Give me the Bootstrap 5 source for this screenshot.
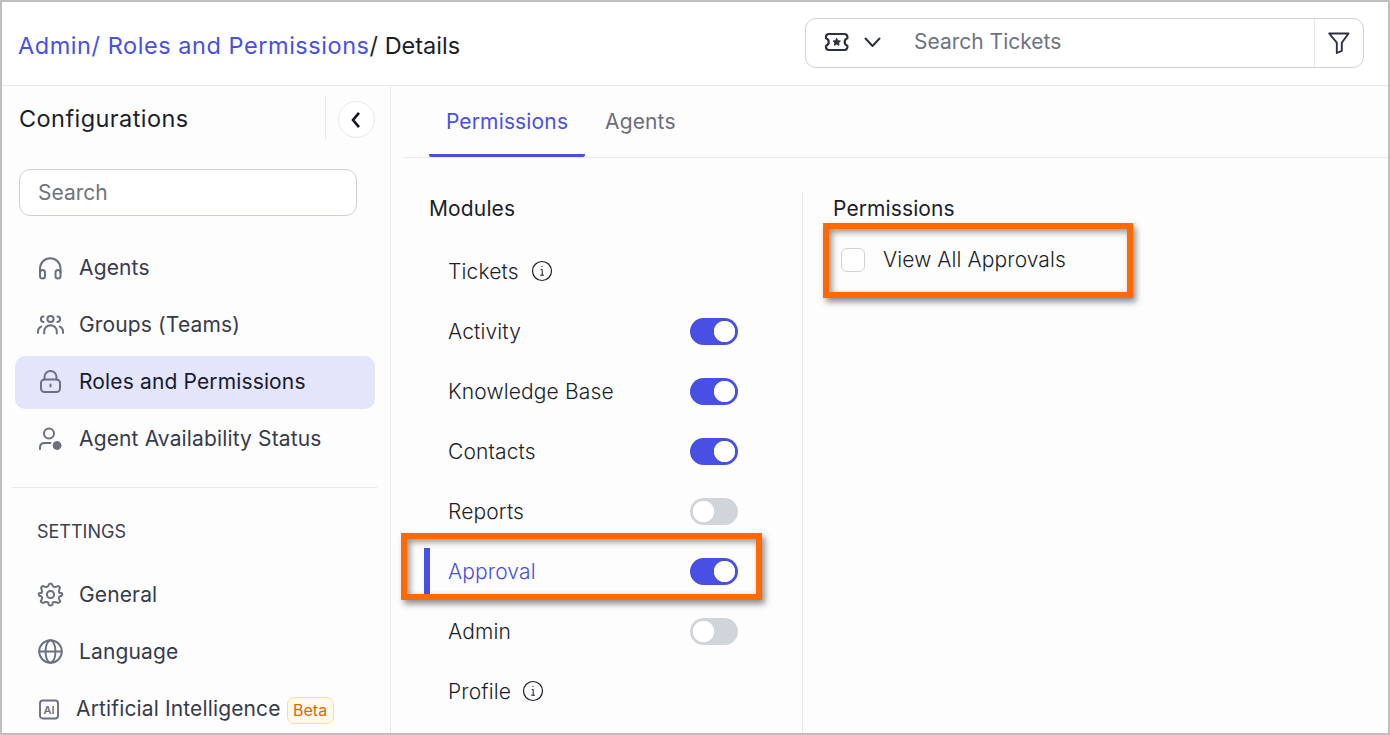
<!DOCTYPE html>
<html lang="en">
<head>
    <meta charset="UTF-8">
    <meta name="viewport" content="width=device-width, initial-scale=1">
    <title>Roles and Permissions</title>
    <link href="https://cdn.jsdelivr.net/npm/bootstrap@5.3.3/dist/css/bootstrap.min.css" rel="stylesheet">
    <script src="https://cdn.jsdelivr.net/npm/bootstrap@5.3.3/dist/js/bootstrap.bundle.min.js"></script>
    <style>
        :root {
            --brand: #4850e4;
            --line: #e9e8ee;
            --muted: #6b7080;
        }
        body {
            font-family: Inter, "Liberation Sans", sans-serif;
            font-size: 21px;
            line-height: 1.2;
            color: #1b1d28;
        }
        svg { display: block; fill: none; stroke: currentColor; stroke-linecap: round; stroke-linejoin: round; flex: none; }
        .page-frame { height: 100vh; border: 2px solid #bfbfbf; background: #fdfdfe; }

        /* top bar */
        .topbar { height: 84px; border-bottom: 1px solid var(--line); padding: 0 24px 0 16px; background: #fff; }
        .crumbs { font-size: 23.5px; letter-spacing: 0; padding-top: 6px; }
        .crumbs a { color: var(--brand); letter-spacing: .55px; }
        .ticket-search { width: 559px; height: 50px; margin-bottom: 1px; border: 1px solid #d0d1d8; border-radius: 11px; color: #2c2f40; }
        .ticket-search > svg { margin-bottom: 2px; }
        .ticket-search .caret { margin-left: 11px; }
        .ticket-search input { border: 0; padding: 0 0 3px; margin-left: 23px; background: none; flex: 1; min-width: 0; font-size: 21px; }
        .ticket-search input::placeholder, .side-search::placeholder { color: #6f7380; opacity: 1; }
        .filter-btn { width: 49px; border-left: 1px solid var(--line); }

        /* sidebar */
        .sidebar { width: 389px; border-right: 1px solid var(--line); }
        .side-head { height: 44px; margin: 10px 15px 0 17px; }
        .side-title { font-size: 23.5px; letter-spacing: .42px; padding-top: 2px; }
        .side-toggle { border-left: 1px solid var(--line); padding-left: 12px; height: 44px; }
        .round-btn { width: 37px; height: 37px; margin-top: 3px; border: 1px solid #e9e5ef; border-radius: 50%; background: #fff; color: #14151f; }
        .side-search { width: 338px; height: 47px; margin: 29px 0 0 17px; border: 1px solid #d0d1d8; border-radius: 11px; padding: 0 18px 1px; font-size: 21px; background: #fff; }
        .side-nav { margin: 26px 15px 0 13px; gap: 4px; }
        .side-nav .nav-link { height: 53px; padding: 0 0 2px 21px; border-radius: 10px; color: #373b49; gap: 15px; letter-spacing: .14px; }
        .side-nav .nav-link svg { color: var(--muted); }
        .side-nav .nav-link.active { background: #e4e4fb; color: #171a2c; }
        .side-rule { height: 1px; background: var(--line); margin: 21px 13px 0 10px; }
        .side-section { font-size: 18px; color: #3d404e; margin: 33px 0 0 35px; }
        .beta { font-size: 16px; letter-spacing: 0; color: #d9690d; background: #fff8eb; border: 1px solid #fbdf8f; border-radius: 7px; height: 27px; width: 47px; margin-left: -9px; margin-top: 5px; }

        /* content */
        .tabs { height: 72px; margin-left: 13px; padding-left: 25px; border-bottom: 1px solid var(--line); letter-spacing: .15px; }
        .tabs .nav-link { padding: 0; width: 156px; height: 71px; color: #6b6e7a; }
        .tabs .nav-link.active { padding-top: 3px; color: var(--brand); border-bottom: 3px solid var(--brand); border-radius: 2px; }
        .modules { width: 411px; padding: 38px 0 0 38px; letter-spacing: .14px; }
        .module-list { margin-top: 21px; font-weight: 300; }
        .module-row { height: 59px; margin-bottom: 1px; padding-left: 19px; padding-right: 64px; }
        .module-row > svg { margin-bottom: 1px; }
        .module-row.active { color: var(--brand); }
        .module-row.active .marker { position: absolute; left: -5px; top: 6px; width: 6px; height: 46px; background: var(--brand); }
        .form-switch .form-check-input { width: 48px; height: 27px; margin: 0; border: 0; background-color: #d1d5db; background-size: auto;
            background-image: radial-gradient(circle 11px at 13.5px 13.5px, #fff 10.3px, transparent 11px); background-position: 0 0; }
        .form-switch .form-check-input:checked { background-color: var(--brand); background-position: 0 0;
            background-image: radial-gradient(circle 11px at 34.5px 13.5px, #fff 10.3px, transparent 11px); }
        .grants { border-left: 1px solid var(--line); margin-top: 34px; padding: 4px 0 0 30px; flex: 1; letter-spacing: .1px; }
        .grant-row { margin: 26px 0 0 8px; height: 25px; gap: 18px; font-weight: 300; }
        .grant-row .form-check-input { width: 24px; height: 24px; margin: 0; border: 1px solid #cfd0da; border-radius: 6px; }

        /* callout boxes laid over the content */
        .callout { position: absolute; border: 6px solid #ff6900; pointer-events: none;
            box-shadow: 3px 4px 6px rgba(60, 50, 50, .55), inset 3px 3px 6px rgba(60, 60, 60, .55); }
        .callout-module { left: -28px; top: -9px; width: 361px; height: 67px; }
        .callout-grant { left: -18px; top: -24px; width: 310px; height: 75px; }
    </style>
</head>
<body>
<div class="page-frame d-flex flex-column overflow-hidden">

    <header class="topbar d-flex align-items-center justify-content-between flex-shrink-0">
        <div class="crumbs"><a href="#" class="text-decoration-none">Admin/ Roles and Permissions</a>/ Details</div>
        <div class="ticket-search d-flex align-items-center bg-white">
            <svg class="ms-3" width="28" height="24" viewBox="0 0 28 24" stroke-width="2.200">
                <path d="M7 4h15.400a3 3 0 0 1 3 3v1.300c-3.600 1.200-3.600 6.200 0 7.400V17a3 3 0 0 1-3 3H7a3 3 0 0 1-3-3v-1.300c3.600-1.200 3.600-6.200 0-7.400V7a3 3 0 0 1 3-3z"/>
                <path d="M14.700 8.500l1.200 2.200 2.500.4-1.800 1.700.4 2.500-2.300-1.200-2.300 1.200.4-2.500-1.800-1.700 2.500-.4z" fill="currentColor" stroke-width="1"/>
            </svg>
            <svg class="caret" width="22" height="18" viewBox="0 0 22 18" stroke-width="2"><path d="M4.500 5.500l7 7.500 7-7.500"/></svg>
            <input type="text" class="ps-2" placeholder="Search Tickets">
            <div class="filter-btn h-100 d-flex align-items-center justify-content-center">
                <svg width="24" height="24" viewBox="0 0 24 24" stroke-width="1.900"><path d="M2.200 2.500h19.300l-6.700 9.200v8.100l-5 2.200V11.700z"/></svg>
            </div>
        </div>
    </header>

    <div class="d-flex flex-grow-1">
        <aside class="sidebar flex-shrink-0">
            <div class="side-head d-flex align-items-center justify-content-between">
                <div class="side-title">Configurations</div>
                <div class="side-toggle d-flex align-items-center">
                    <button type="button" class="round-btn d-flex align-items-center justify-content-center p-0">
                        <svg width="14" height="18" viewBox="0 0 14 18" stroke-width="2.600"><path d="M9 1.800L3 9l6 7.200" stroke-linecap="butt" stroke-linejoin="miter"/></svg>
                    </button>
                </div>
            </div>
            <input type="text" class="side-search d-block" placeholder="Search">

            <nav class="side-nav nav flex-column">
                <a href="#" class="nav-link d-flex align-items-center">
                    <svg width="28" height="28" viewBox="0 0 28 28" stroke-width="2"><path d="M4 18.500v-4a10.200 10.200 0 0 1 20.500 0v4"/><rect x="4" y="16" width="5" height="8.500" rx="2.500"/><rect x="19.500" y="16" width="5" height="8.500" rx="2.500"/></svg>
                    Agents
                </a>
                <a href="#" class="nav-link d-flex align-items-center">
                    <svg width="28" height="28" viewBox="0 0 28 28" stroke-width="2"><circle cx="14.500" cy="8" r="3.100"/><path d="M8.200 22.500v-2a6.300 6.300 0 0 1 12.600 0v2M2 22v-1.500c0-2.400 1.200-4.200 3.300-4.900M27 22v-1.500c0-2.400-1.200-4.200-3.300-4.900M7.500 5.400c-3.500.3-3.500 5 0 5.600M21.500 5.400c3.500.3 3.500 5 0 5.600"/></svg>
                    Groups (Teams)
                </a>
                <a href="#" class="nav-link active d-flex align-items-center">
                    <svg width="28" height="28" viewBox="0 0 28 28" stroke-width="2"><rect x="5" y="11.500" width="19" height="12.500" rx="3.500"/><path d="M8.500 11.500V9a6 6 0 0 1 12 0v2.500M14.500 16.500v2"/></svg>
                    Roles and Permissions
                </a>
                <a href="#" class="nav-link d-flex align-items-center">
                    <svg width="28" height="28" viewBox="0 0 28 28" stroke-width="2"><circle cx="13" cy="8.500" r="5"/><path d="M4 24v-1.500c0-3 2-4.500 4.500-4.500h6"/><circle cx="21" cy="20.500" r="3.900" fill="currentColor" stroke-width="1"/></svg>
                    Agent Availability Status
                </a>
            </nav>

            <div class="side-rule"></div>
            <div class="side-section">SETTINGS</div>

            <nav class="side-nav nav flex-column">
                <a href="#" class="nav-link d-flex align-items-center">
                    <svg width="28" height="28" viewBox="0 0 28 28" stroke-width="2"><circle cx="14.500" cy="14.500" r="3.600"/><path d="M14.500 3.500q1.600 0 2 1.800t2 1.700 2.700-.7 2.100.4.400 2.100-.7 2.700 1.700 1.400 1.500 1.600-1.500 1.600-1.700 1.400.7 2.700-.4 2.100-2.100.4-2.700-.7-2 1.700-2 1.800-2-1.800-2-1.700-2.700.7-2.100-.4-.4-2.100.7-2.700-1.700-1.400-1.500-1.600 1.500-1.600 1.700-1.400-.7-2.700.4-2.100 2.100-.4 2.700.7 2-1.700 2-1.800z"/></svg>
                    General
                </a>
                <a href="#" class="nav-link d-flex align-items-center">
                    <svg width="28" height="28" viewBox="0 0 28 28" stroke-width="1.900"><circle cx="14.500" cy="14.500" r="11.300"/><ellipse cx="14.500" cy="14.500" rx="5" ry="11.300"/><path d="M3.200 14.500h22.600"/></svg>
                    Language
                </a>
                <a href="#" class="nav-link d-flex align-items-center">
                    <svg width="25" height="28" viewBox="0 0 25 28" stroke-width="1.900"><rect x="4" y="6.500" width="18" height="18" rx="2.800"/><text x="13" y="19.500" font-size="11" font-weight="600" text-anchor="middle" fill="currentColor" stroke="none" letter-spacing="0">AI</text></svg>
                    Artificial Intelligence
                    <span class="beta d-flex align-items-center justify-content-center">Beta</span>
                </a>
            </nav>
        </aside>

        <main class="flex-grow-1 d-flex flex-column">
            <ul class="tabs nav flex-shrink-0">
                <li class="nav-item"><a href="#" class="nav-link active d-flex align-items-center justify-content-center">Permissions</a></li>
                <li class="nav-item"><a href="#" class="nav-link d-flex align-items-center ps-3 ms-1">Agents</a></li>
            </ul>

            <div class="d-flex flex-grow-1">
                <section class="modules flex-shrink-0">
                    <div>Modules</div>
                    <div class="module-list">
                        <div class="module-row d-flex align-items-center">
                            Tickets
                            <svg class="ms-2" width="30" height="24" viewBox="0 0 30 24" stroke-width="1.200"><circle cx="15" cy="12" r="9.500"/><path d="M14.200 10.500h1v5.500M13.600 16.200h3M15 7.300v.3" stroke-width="1"/></svg>
                        </div>
                        <div class="module-row d-flex align-items-center justify-content-between">
                            Activity
                            <div class="form-check form-switch p-0 m-0 d-flex"><input class="form-check-input" type="checkbox" role="switch" checked></div>
                        </div>
                        <div class="module-row d-flex align-items-center justify-content-between">
                            Knowledge Base
                            <div class="form-check form-switch p-0 m-0 d-flex"><input class="form-check-input" type="checkbox" role="switch" checked></div>
                        </div>
                        <div class="module-row d-flex align-items-center justify-content-between">
                            Contacts
                            <div class="form-check form-switch p-0 m-0 d-flex"><input class="form-check-input" type="checkbox" role="switch" checked></div>
                        </div>
                        <div class="module-row d-flex align-items-center justify-content-between">
                            Reports
                            <div class="form-check form-switch p-0 m-0 d-flex"><input class="form-check-input" type="checkbox" role="switch"></div>
                        </div>
                        <div class="module-row active position-relative d-flex align-items-center justify-content-between">
                            <span class="callout callout-module"></span>
                            <span class="marker"></span>
                            Approval
                            <div class="form-check form-switch p-0 m-0 d-flex"><input class="form-check-input" type="checkbox" role="switch" checked></div>
                        </div>
                        <div class="module-row d-flex align-items-center justify-content-between">
                            Admin
                            <div class="form-check form-switch p-0 m-0 d-flex"><input class="form-check-input" type="checkbox" role="switch"></div>
                        </div>
                        <div class="module-row d-flex align-items-center">
                            Profile
                            <svg class="ms-2" width="28" height="24" viewBox="0 0 28 24" stroke-width="1.200"><circle cx="14" cy="12" r="9.500"/><path d="M13.200 10.500h1v5.500M12.600 16.200h3M14 7.300v.3" stroke-width="1"/></svg>
                        </div>
                    </div>
                </section>

                <section class="grants">
                    <div>Permissions</div>
                    <div class="grant-row position-relative d-flex align-items-center">
                        <span class="callout callout-grant"></span>
                        <input class="form-check-input" type="checkbox" id="viewAllApprovals">
                        <label for="viewAllApprovals">View All Approvals</label>
                    </div>
                </section>
            </div>
        </main>
    </div>
</div>
</body>
</html>
